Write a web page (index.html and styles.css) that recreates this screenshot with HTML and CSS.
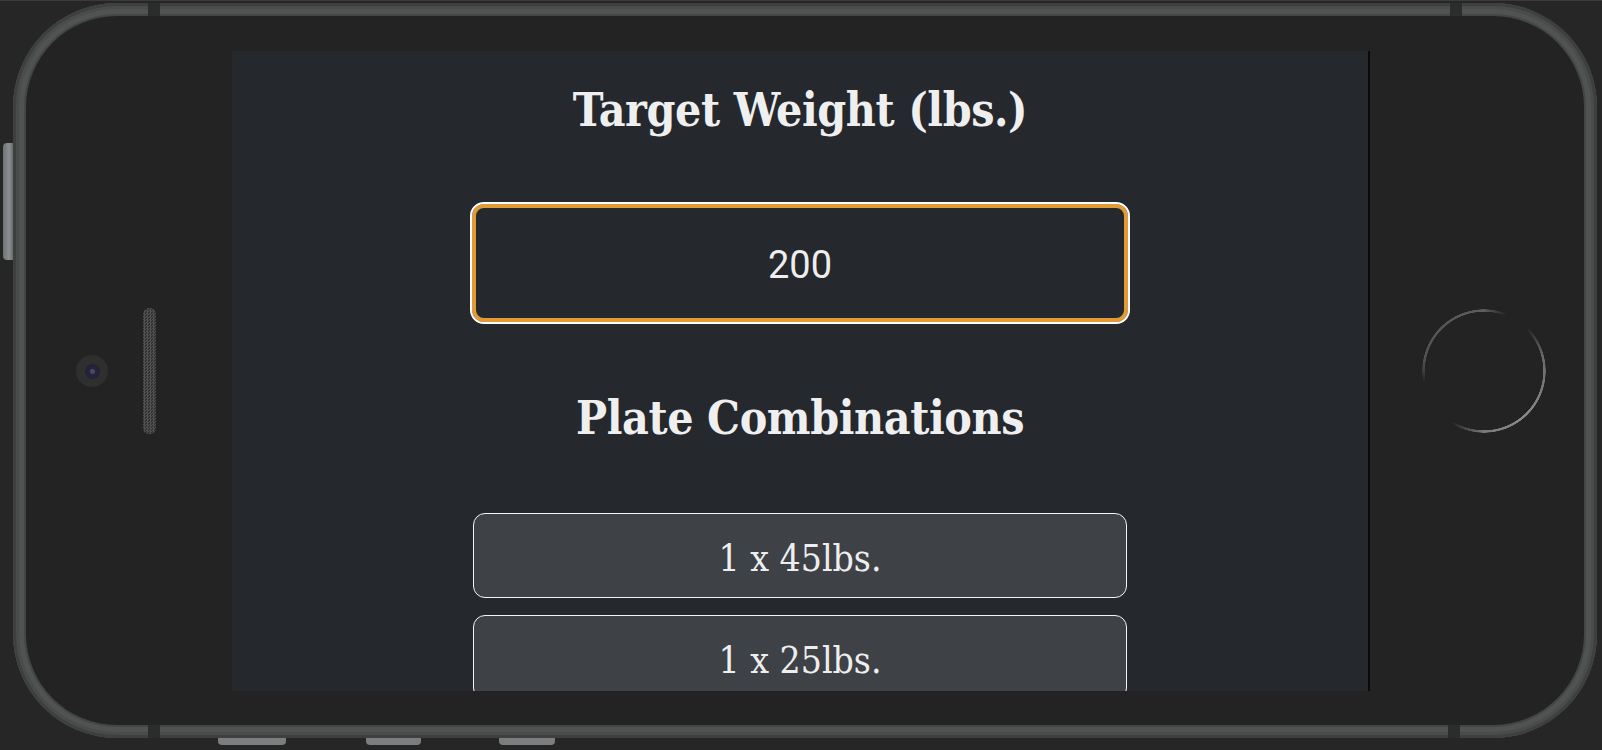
FILE: index.html
```html
<!DOCTYPE html>
<html lang="en">
<head>
<meta charset="utf-8">
<title>Plate Calculator</title>
<link rel="stylesheet" href="styles.css">
</head>
<body>
<div class="device">
  <div class="device-row">
    <span class="side-btn"></span>
    <div class="frame">
      <span class="notch notch-tl"></span>
      <span class="notch notch-tr"></span>
      <span class="notch notch-bl"></span>
      <span class="notch notch-br"></span>
      <div class="bezel">
        <div class="left-col">
          <span class="camera"><span class="lens"></span></span>
          <span class="speaker"></span>
        </div>
        <main class="screen">
          <h1 class="heading heading-first">Target Weight (lbs.)</h1>
          <div class="weight-input">200</div>
          <h1 class="heading heading-second">Plate Combinations</h1>
          <ul class="plates">
            <li class="plate">1 x 45lbs.</li>
            <li class="plate">1 x 25lbs.</li>
          </ul>
        </main>
        <div class="right-col">
          <span class="home"></span>
        </div>
      </div>
    </div>
  </div>
  <div class="bottom-btns">
    <span class="bbtn bbtn-1"></span>
    <span class="bbtn bbtn-2"></span>
    <span class="bbtn bbtn-3"></span>
  </div>
</div>
</body>
</html>
```
FILE: styles.css
```css
html, body {
  margin: 0;
  padding: 0;
}
body {
  width: 1602px;
  height: 750px;
  overflow: hidden;
  background: #262626;
  border-top: 1px solid #3a3a3a;
  box-sizing: border-box;
}
.device {
  display: flex;
  flex-direction: column;
  padding: 2px 0 0 3px;
}
.device-row {
  display: flex;
  align-items: flex-start;
}
.side-btn {
  width: 10px;
  height: 117px;
  margin-top: 140px;
  border-radius: 4px 0 0 4px;
  background: linear-gradient(90deg, #6f7274, #8c8f91 60%, #6a6d6f);
}
.frame {
  position: relative;
  width: 1584px;
  height: 735px;
  box-sizing: border-box;
  padding: 13px;
  border-radius: 104px;
  background: #4f5352;
  box-shadow: inset 0 0 0 3px #3d403f, inset 0 0 0 6px #494c4b;
}
.notch {
  position: absolute;
  width: 12px;
  height: 13px;
  background: #2a2d2c;
}
.notch-tl { left: 135px; top: 0; }
.notch-tr { left: 1437px; top: 0; }
.notch-bl { left: 135px; bottom: 0; }
.notch-br { left: 1435px; bottom: 0; }
.bezel {
  display: flex;
  height: 100%;
  box-sizing: border-box;
  padding: 35px 0 34px;
  border-radius: 91px;
  background: #232323;
  box-shadow: 0 0 0 2px #434645;
}
.left-col {
  width: 206px;
  display: flex;
  align-items: center;
  padding-left: 50px;
  box-sizing: border-box;
  gap: 35px;
}
.camera {
  width: 32px;
  height: 32px;
  border-radius: 50%;
  background: #2f2f30;
  display: flex;
  align-items: center;
  justify-content: center;
}
.lens {
  width: 15px;
  height: 15px;
  border-radius: 50%;
  background: radial-gradient(circle at 50% 50%, #4a4768 0 2px, #25243a 3px, #1f1e30 100%);
}
.speaker {
  width: 13px;
  height: 126px;
  border-radius: 6px;
  background: repeating-conic-gradient(#505050 0 25%, #333 0 50%) 0 0 / 3px 3px;
}
.right-col {
  width: 214px;
  display: flex;
  align-items: center;
  padding-left: 52px;
  box-sizing: border-box;
}
.home {
  width: 124px;
  height: 124px;
  border-radius: 50%;
  background: conic-gradient(#5e5e5e 0deg, rgba(90,90,90,0) 22deg, rgba(90,90,90,0) 45deg, #6a6a6a 75deg, #8a8a8a 140deg, #7a7a7a 180deg, rgba(90,90,90,0) 212deg, rgba(90,90,90,0) 258deg, #505050 278deg, #5e5e5e 360deg);
  -webkit-mask: radial-gradient(circle, transparent 59px, #000 59.5px, #000 61.5px, transparent 62px);
  mask: radial-gradient(circle, transparent 59px, #000 59.5px, #000 61.5px, transparent 62px);
}
.screen {
  width: 1138px;
  height: 640px;
  box-sizing: border-box;
  border-right: 2px solid #0a0a0a;
  background: #25282d;
  overflow: hidden;
  display: flex;
  flex-direction: column;
  align-items: center;
  padding-top: 31px;
}
.screen > * {
  flex-shrink: 0;
}
.heading {
  margin: 0;
  font-family: "Roboto Slab", "DejaVu Serif Condensed", "DejaVu Serif", serif;
  font-stretch: condensed;
  font-weight: bold;
  font-size: 46px;
  letter-spacing: -0.4px;
  line-height: 56px;
  color: #efefef;
  text-align: center;
}
.weight-input {
  margin-top: 64px;
  width: 660px;
  height: 122px;
  box-sizing: border-box;
  border: 2px solid #ffffff;
  border-radius: 14px;
  box-shadow: inset 0 0 0 4px #e29b34;
  display: flex;
  align-items: center;
  justify-content: center;
  padding-top: 4px;
  font-family: Roboto, "Liberation Sans", sans-serif;
  font-size: 38px;
  color: #eeeeee;
}
.heading-second {
  margin-top: 66px;
}
.plates {
  list-style: none;
  margin: 67px 0 0;
  padding: 0;
  display: flex;
  flex-direction: column;
  gap: 17px;
}
.plate {
  flex-shrink: 0;
  width: 654px;
  height: 85px;
  box-sizing: border-box;
  border: 1.5px solid #f4f4f4;
  border-radius: 12px;
  background: #3e4146;
  display: flex;
  align-items: center;
  justify-content: center;
  padding-top: 5px;
  font-family: "Roboto Slab", "DejaVu Serif Condensed", "DejaVu Serif", serif;
  font-stretch: condensed;
  font-size: 37px;
  color: #eeeeee;
}
.bottom-btns {
  display: flex;
  padding-left: 215px;
  height: 8px;
}
.bbtn {
  height: 7px;
  border-radius: 0 0 4px 4px;
  background: #7b7d7e;
}
.bbtn-1 { width: 68px; }
.bbtn-2 { width: 55px; margin-left: 80px; }
.bbtn-3 { width: 56px; margin-left: 78px; }
```
